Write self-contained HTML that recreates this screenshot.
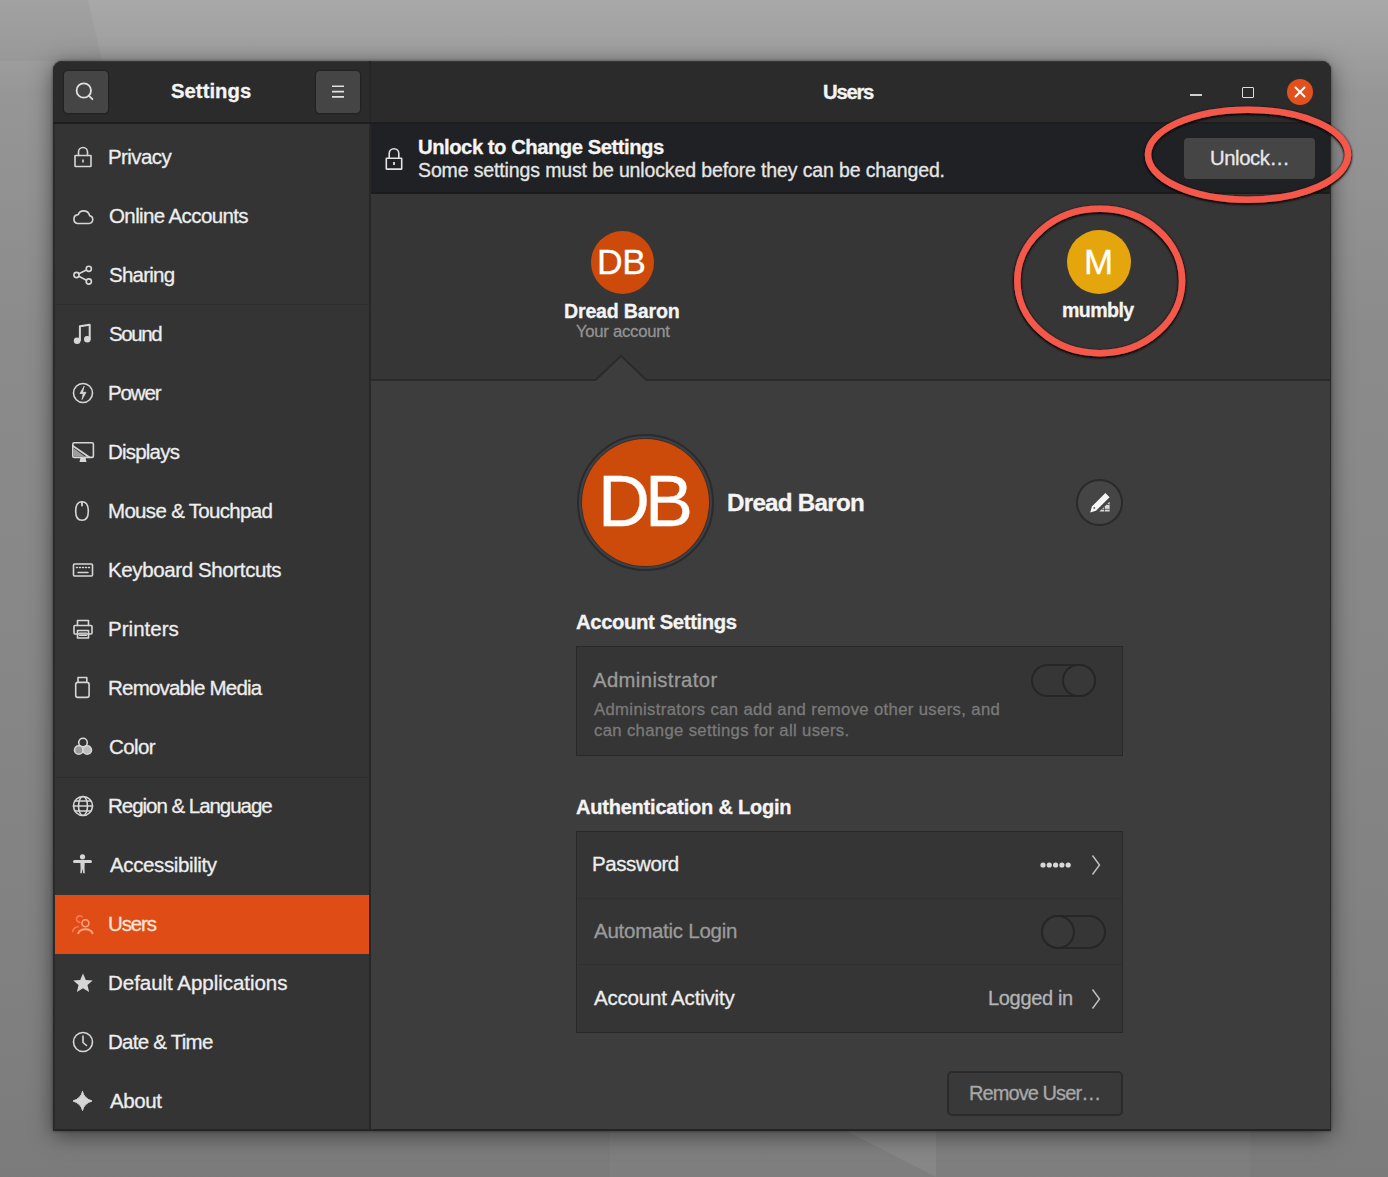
<!DOCTYPE html>
<html><head><meta charset="utf-8"><title>Users - Settings</title>
<style>
*{box-sizing:border-box;margin:0;padding:0}
html,body{width:1388px;height:1177px;overflow:hidden}
body{position:relative;font-family:"Liberation Sans",sans-serif;background:linear-gradient(180deg,#a8a8a8 0%,#a2a2a2 3%,#969696 8%,#8b8b8b 28%,#878787 55%,#808080 85%,#7b7b7b 100%)}
.a{position:absolute}
.t{position:absolute;line-height:1;white-space:nowrap;font-family:"Liberation Sans",sans-serif;-webkit-text-stroke:0.3px currentColor}
svg{position:absolute;overflow:visible}
</style></head><body>
<!-- bg shapes -->
<svg width="1388" height="1177" style="left:0;top:0"><path d="M846 1131H936V1177z" fill="#ffffff" fill-opacity="0.07"/><path d="M610 1131H1250V1177H610z" fill="#ffffff" fill-opacity="0.025"/><path d="M0 0H88L102 61H0z" fill="#000" fill-opacity="0.03"/></svg>
<!-- window -->
<div class="a" style="left:53px;top:61px;width:1278px;height:1070px;border-radius:9px 9px 0 0;background:#3d3d3d;box-shadow:0 4px 22px rgba(0,0,0,.5),0 0 3px rgba(0,0,0,.45)"></div>
<div class="a" style="left:53px;top:61px;width:1278px;height:62px;border-radius:9px 9px 0 0;background:#2b2b2b;box-shadow:inset 0 1px 0 #363636"></div>
<div class="a" style="left:53px;top:122px;width:1278px;height:2px;background:#1d1d1d"></div>
<div class="a" style="left:369px;top:61px;width:2px;height:61px;background:#262626"></div>
<!-- sidebar -->
<div class="a" style="left:53px;top:124px;width:316px;height:1005px;background:#343434"></div>
<div class="a" style="left:369px;top:124px;width:2px;height:1005px;background:#272727"></div>
<div class="a" style="left:53px;top:304px;width:316px;height:1px;background:#2e2e2e"></div>
<div class="a" style="left:53px;top:777px;width:316px;height:1px;background:#2e2e2e"></div>
<div class="a" style="left:53px;top:895px;width:316px;height:59px;background:#e04c16"></div>
<!-- header buttons -->
<div class="a" style="left:63.5px;top:71px;width:44px;height:42px;border-radius:4px;background:#454545;box-shadow:0 0 0 1.2px #222"></div>
<svg width="24" height="24" viewBox="0 0 24 24" style="left:73px;top:80px" fill="none" stroke="#e0e0e0" stroke-width="1.8" stroke-linecap="round"><circle cx="10.8" cy="10.5" r="7.2"/><path d="M15.8 15.6l3.6 3.6"/></svg>
<div class="a" style="left:316px;top:71px;width:44px;height:42px;border-radius:4px;background:#454545;box-shadow:0 0 0 1.2px #222"></div>
<svg width="24" height="24" viewBox="0 0 24 24" style="left:326px;top:80px" fill="none" stroke="#e0e0e0" stroke-width="1.6"><path d="M6 6.3h12M6 11.6h12M6 16.9h12"/></svg>
<!-- window controls -->
<div class="a" style="left:1190px;top:94.2px;width:11.8px;height:1.7px;background:#cfcfcf"></div>
<div class="a" style="left:1242px;top:86.5px;width:11.5px;height:11px;border:1.6px solid #dcdcdc;border-radius:1px"></div>
<div class="a" style="left:1287px;top:79px;width:26px;height:26px;border-radius:50%;background:#e2511d"></div>
<svg width="26" height="26" viewBox="0 0 26 26" style="left:1287px;top:79px" stroke="#ffffff" stroke-width="2" stroke-linecap="round"><path d="M8.5 8.5l9 9M17.5 8.5l-9 9"/></svg>
<!-- infobar -->
<div class="a" style="left:371px;top:124px;width:960px;height:69px;background:#202124"></div>
<div class="a" style="left:371px;top:192px;width:960px;height:2px;background:#1c1c1c"></div>
<svg width="18" height="24" viewBox="0 0 18 24" style="left:385px;top:146.5px" fill="none" stroke="#e2e2e2" stroke-width="1.6"><path d="M4.2 11V6.5a4.8 4.8 0 0 1 9.6 0V11"/><rect x="1.3" y="11.3" width="15.4" height="10.8" rx="0.4"/><rect x="8.1" y="15" width="1.8" height="3" fill="#e2e2e2" stroke="none"/></svg>
<div class="a" style="left:1184.3px;top:137.8px;width:131px;height:41.4px;border-radius:4px;background:#454545"></div>
<!-- carousel -->
<div class="a" style="left:371px;top:194px;width:960px;height:185px;background:#363636"></div>
<div class="a" style="left:371px;top:379px;width:960px;height:2px;background:#2a2a2a"></div>
<svg width="60" height="30" viewBox="0 0 60 30" style="left:590.7px;top:354px"><path d="M0 26.5h4L30 1.5 56 26.5h4V30H0z" fill="#3d3d3d"/><path d="M0 26h4.5L30 1.8 55.5 26H60" fill="none" stroke="#2a2a2a" stroke-width="2"/></svg>
<div class="a" style="left:590.5px;top:230.5px;width:63px;height:63px;border-radius:50%;background:#cd4a0b"></div>
<div class="a" style="left:1066.5px;top:230px;width:64px;height:64px;border-radius:50%;background:#e5a50c"></div>
<!-- main avatar -->
<div class="a" style="left:576.5px;top:433.5px;width:137.5px;height:137.5px;border-radius:50%;background:#3a4149;border:2.2px solid #2a2b2d"></div>
<div class="a" style="left:581.5px;top:438.5px;width:127.5px;height:127.5px;border-radius:50%;background:#cc4b0a;box-shadow:0 0 0 1px #4a2a1a"></div>
<!-- edit button -->
<div class="a" style="left:1076.3px;top:479.4px;width:46.4px;height:46.6px;border-radius:50%;background:#454545;border:2px solid #2a2a2a"></div>
<svg width="70" height="65" viewBox="1065 470 70 65" style="left:1065px;top:470px"><path d="M1105.4 493l4.2 4.2-13.6 13.5-5.8 1.7 1.7-5.8z" fill="#f6f6f6"/><circle cx="1094.3" cy="507.9" r="0.9" fill="#555"/><path d="M1099.3 511.6h10.3v-9.9z" fill="#d8d8d8"/><path d="M1104.5 506.8v4.8M1101.8 509.3h7.8M1106.8 504.5h2.8" stroke="#444" stroke-width="0.8"/></svg>
<!-- admin box -->
<div class="a" style="left:576px;top:646px;width:547px;height:110px;background:#353535;border:1.5px solid #282828"></div>
<div class="a" style="left:1031px;top:663.5px;width:64.5px;height:33.5px;border-radius:17px;border:2px solid #262626;background:#363636"></div>
<div class="a" style="left:1062px;top:663.5px;width:33.5px;height:33.5px;border-radius:50%;border:2px solid #262626;background:#383838"></div>
<!-- auth box -->
<div class="a" style="left:576px;top:831px;width:547px;height:201.5px;background:#353535;border:1.5px solid #282828"></div>
<div class="a" style="left:577.5px;top:897.5px;width:544px;height:1px;background:#303030"></div>
<div class="a" style="left:577.5px;top:964px;width:544px;height:1px;background:#303030"></div>
<svg width="40" height="10" viewBox="0 0 40 10" style="left:1039px;top:859.5px" fill="#d8d8d8"><circle cx="4" cy="5" r="2.6"/><circle cx="10.3" cy="5" r="2.6"/><circle cx="16.6" cy="5" r="2.6"/><circle cx="22.9" cy="5" r="2.6"/><circle cx="29.2" cy="5" r="2.6"/></svg>
<svg width="12" height="24" viewBox="0 0 12 24" style="left:1090px;top:853px" fill="none" stroke="#bdbdbd" stroke-width="1.5"><path d="M2.5 2.5l7 9.5-7 9.5"/></svg>
<div class="a" style="left:1040.7px;top:914.8px;width:65px;height:34px;border-radius:17px;border:2px solid #262626;background:#363636"></div>
<div class="a" style="left:1040.7px;top:914.8px;width:34px;height:34px;border-radius:50%;border:2px solid #262626;background:#383838"></div>
<svg width="12" height="24" viewBox="0 0 12 24" style="left:1090px;top:987px" fill="none" stroke="#bdbdbd" stroke-width="1.5"><path d="M2.5 2.5l7 9.5-7 9.5"/></svg>
<!-- remove user -->
<div class="a" style="left:947.4px;top:1071.2px;width:176px;height:44.6px;border-radius:5px;background:#393939;border:2px solid #2b2b2b"></div>
<!-- window bottom -->
<div class="a" style="left:53px;top:1129px;width:1278px;height:2px;background:#242424"></div>
<div class="a" style="left:53px;top:124px;width:1.5px;height:1007px;background:#2a2a2a"></div>
<div class="a" style="left:1329.5px;top:124px;width:1.5px;height:1007px;background:#2a2a2a"></div>
<svg width="24" height="24" viewBox="0 0 24 24" style="left:71px;top:145px" fill="none" stroke="#d6d6d6" stroke-width="1.6" stroke-linecap="round" stroke-linejoin="round"><path d="M7.5 10.5V7a4.5 4.5 0 0 1 9 0v3.5"/><rect x="4" y="10.5" width="16" height="11" rx="0.5"/><rect x="11.2" y="14.5" width="1.6" height="3" fill="#d6d6d6" stroke="none"/></svg>
<svg width="24" height="24" viewBox="0 0 24 24" style="left:71px;top:204px" fill="none" stroke="#d6d6d6" stroke-width="1.6" stroke-linecap="round" stroke-linejoin="round"><path d="M6.5 19.5h11.5a4 4 0 0 0 .6-7.9A6 6 0 0 0 7.2 10.6 4.5 4.5 0 0 0 6.5 19.5z"/></svg>
<svg width="24" height="24" viewBox="0 0 24 24" style="left:71px;top:263px" fill="none" stroke="#d6d6d6" stroke-width="1.6" stroke-linecap="round" stroke-linejoin="round"><circle cx="5.5" cy="12" r="2.6"/><circle cx="17.8" cy="5.8" r="2.6"/><circle cx="17.8" cy="18.5" r="2.6"/><path d="M7.8 10.8l7.7-3.8M7.8 13.2l7.7 4"/></svg>
<svg width="24" height="24" viewBox="0 0 24 24" style="left:71px;top:322px" fill="none" stroke="#d6d6d6" stroke-width="1.6" stroke-linecap="round" stroke-linejoin="round"><path d="M8.9 18.5V4.3l9.8-1.6v14.2" stroke-width="2"/><circle cx="6.1" cy="18.8" r="2.5" fill="#d6d6d6"/><circle cx="16.3" cy="17.2" r="2.5" fill="#d6d6d6"/></svg>
<svg width="24" height="24" viewBox="0 0 24 24" style="left:71px;top:381px" fill="none" stroke="#d6d6d6" stroke-width="1.6" stroke-linecap="round" stroke-linejoin="round"><circle cx="12" cy="12" r="9.5"/><path d="M13 5.5l-4 7h3.2l-1.2 6 4-7.2h-3.2z" fill="#d6d6d6" stroke-width="0.8"/></svg>
<svg width="24" height="24" viewBox="0 0 24 24" style="left:71px;top:440px" fill="none" stroke="#d6d6d6" stroke-width="1.6" stroke-linecap="round" stroke-linejoin="round"><rect x="1.8" y="2.8" width="20.6" height="14.6" rx="1.5"/><path d="M2 6l16 11"/><path d="M2.6 8.2v8.4h11.2z" fill="#9d9d9d" stroke="none"/><path d="M9.5 17.5h5l1 4.6h-7z" fill="#d6d6d6" stroke="none"/></svg>
<svg width="24" height="24" viewBox="0 0 24 24" style="left:71px;top:499px" fill="none" stroke="#d6d6d6" stroke-width="1.6" stroke-linecap="round" stroke-linejoin="round"><path d="M11 2.8c-4.6 0-6.3 3.6-6.3 9.5 0 5.5 2.4 9 6.3 9s6.3-3.5 6.3-9c0-5.9-1.7-9.5-6.3-9.5z"/><path d="M11 3.5v3" stroke-width="1.8"/></svg>
<svg width="24" height="24" viewBox="0 0 24 24" style="left:71px;top:558px" fill="none" stroke="#d6d6d6" stroke-width="1.6" stroke-linecap="round" stroke-linejoin="round"><rect x="2.5" y="6" width="19" height="12" rx="1"/><path d="M5.5 9.5h1M8.5 9.5h1M11.5 9.5h1M14.5 9.5h1M17.5 9.5h1M7 14.5h10" stroke-width="1.4"/></svg>
<svg width="24" height="24" viewBox="0 0 24 24" style="left:71px;top:617px" fill="none" stroke="#d6d6d6" stroke-width="1.6" stroke-linecap="round" stroke-linejoin="round"><path d="M6.5 8.5V3.5h11v5"/><rect x="3" y="8.5" width="18" height="8.5" rx="1"/><rect x="6.5" y="13.5" width="11" height="7.5"/><path d="M8.5 16h7M8.5 18.5h7" stroke-width="1.2"/></svg>
<svg width="24" height="24" viewBox="0 0 24 24" style="left:71px;top:676px" fill="none" stroke="#d6d6d6" stroke-width="1.6" stroke-linecap="round" stroke-linejoin="round"><rect x="4.7" y="6.4" width="13.4" height="15" rx="2.2"/><path d="M7 6.2V1.5h8.8v4.7"/></svg>
<svg width="24" height="24" viewBox="0 0 24 24" style="left:71px;top:735px" fill="none" stroke="#d6d6d6" stroke-width="1.6" stroke-linecap="round" stroke-linejoin="round"><circle cx="12" cy="7.5" r="4.3"/><circle cx="7.8" cy="15" r="4.3" fill="#9a9a9a"/><circle cx="16.2" cy="15" r="4.3" fill="#bdbdbd"/></svg>
<svg width="24" height="24" viewBox="0 0 24 24" style="left:71px;top:794px" fill="none" stroke="#d6d6d6" stroke-width="1.6" stroke-linecap="round" stroke-linejoin="round"><circle cx="12" cy="12" r="9.5"/><ellipse cx="12" cy="12" rx="4.5" ry="9.5"/><path d="M2.5 12h19M4 7h16M4 17h16"/></svg>
<svg width="24" height="24" viewBox="0 0 24 24" style="left:71px;top:853px" fill="none" stroke="#d6d6d6" stroke-width="1.6" stroke-linecap="round" stroke-linejoin="round"><circle cx="11.5" cy="3.8" r="2.6" fill="#d6d6d6" stroke="none"/><path d="M3.5 8.6h16" stroke-width="3"/><path d="M9.3 8.5h4.5l-.3 6.2.3 5.5h-1.6l-.7-4.6-.7 4.6H9.3l.3-5.5z" fill="#d6d6d6" stroke="none"/></svg>
<svg width="24" height="24" viewBox="0 0 24 24" style="left:71px;top:912px" fill="none" stroke="#ffa47e" stroke-width="1.6" stroke-linecap="round" stroke-linejoin="round"><path d="M11.2 4.8A3.3 3.3 0 1 0 8.8 10.4" stroke="#fb7a50"/><path d="M1.8 19.5c.4-3 2.3-4.6 5.5-4.8" stroke="#fb7a50"/><circle cx="14.4" cy="11.2" r="3.5" stroke="#ffa47e"/><path d="M7.3 21.2c1-2.7 3.6-4 7.1-4s6.1 1.3 7.1 4" stroke="#ffa47e" stroke-width="2"/></svg>
<svg width="24" height="24" viewBox="0 0 24 24" style="left:71px;top:971px" fill="none" stroke="#d6d6d6" stroke-width="1.6" stroke-linecap="round" stroke-linejoin="round"><path d="M12 2.5l2.8 6.4 6.9.6-5.2 4.6 1.6 6.8L12 17.3l-6.1 3.6 1.6-6.8-5.2-4.6 6.9-.6z" fill="#d6d6d6" stroke="none"/></svg>
<svg width="24" height="24" viewBox="0 0 24 24" style="left:71px;top:1030px" fill="none" stroke="#d6d6d6" stroke-width="1.6" stroke-linecap="round" stroke-linejoin="round"><circle cx="12" cy="12" r="9.5"/><path d="M12 6v6.5l3.5 3"/></svg>
<svg width="24" height="24" viewBox="0 0 24 24" style="left:71px;top:1089px" fill="none" stroke="#d6d6d6" stroke-width="1.6" stroke-linecap="round" stroke-linejoin="round"><path d="M11.5 2.5Q13 9.5 21 12 13 14.5 11.5 21.5 10 14.5 2 12 10 9.5 11.5 2.5z" fill="#d6d6d6" stroke="#d6d6d6" stroke-width="1"/></svg>
<div class="t" id="settings" style="left:171.0px;top:81.2px;font-size:20.3px;font-weight:700;color:#f4f4f4;letter-spacing:0.03px">Settings</div>
<div class="t" id="users_t" style="left:823.0px;top:81.5px;font-size:20.3px;font-weight:700;color:#f4f4f4;letter-spacing:-1.27px">Users</div>
<div class="t" id="side0" style="left:108.0px;top:146.9px;font-size:20.5px;font-weight:400;color:#eeeeee;letter-spacing:-0.58px">Privacy</div>
<div class="t" id="side1" style="left:109.0px;top:205.9px;font-size:20.5px;font-weight:400;color:#eeeeee;letter-spacing:-0.61px">Online Accounts</div>
<div class="t" id="side2" style="left:109.0px;top:264.9px;font-size:20.5px;font-weight:400;color:#eeeeee;letter-spacing:-0.75px">Sharing</div>
<div class="t" id="side3" style="left:109.0px;top:323.9px;font-size:20.5px;font-weight:400;color:#eeeeee;letter-spacing:-1.38px">Sound</div>
<div class="t" id="side4" style="left:108.0px;top:382.9px;font-size:20.5px;font-weight:400;color:#eeeeee;letter-spacing:-1.12px">Power</div>
<div class="t" id="side5" style="left:108.0px;top:441.9px;font-size:20.5px;font-weight:400;color:#eeeeee;letter-spacing:-0.79px">Displays</div>
<div class="t" id="side6" style="left:108.0px;top:500.9px;font-size:20.5px;font-weight:400;color:#eeeeee;letter-spacing:-0.68px">Mouse &amp; Touchpad</div>
<div class="t" id="side7" style="left:108.0px;top:559.9px;font-size:20.5px;font-weight:400;color:#eeeeee;letter-spacing:-0.38px">Keyboard Shortcuts</div>
<div class="t" id="side8" style="left:108.0px;top:618.9px;font-size:20.5px;font-weight:400;color:#eeeeee;letter-spacing:0.03px">Printers</div>
<div class="t" id="side9" style="left:108.0px;top:677.9px;font-size:20.5px;font-weight:400;color:#eeeeee;letter-spacing:-0.79px">Removable Media</div>
<div class="t" id="side10" style="left:109.0px;top:736.9px;font-size:20.5px;font-weight:400;color:#eeeeee;letter-spacing:-0.62px">Color</div>
<div class="t" id="side11" style="left:108.0px;top:795.9px;font-size:20.5px;font-weight:400;color:#eeeeee;letter-spacing:-1.03px">Region &amp; Language</div>
<div class="t" id="side12" style="left:110.0px;top:854.9px;font-size:20.5px;font-weight:400;color:#eeeeee;letter-spacing:-0.38px">Accessibility</div>
<div class="t" id="side13" style="left:108.0px;top:913.9px;font-size:20.5px;font-weight:400;color:#fbe3d8;letter-spacing:-1.12px">Users</div>
<div class="t" id="side14" style="left:108.0px;top:972.9px;font-size:20.5px;font-weight:400;color:#eeeeee;letter-spacing:-0.03px">Default Applications</div>
<div class="t" id="side15" style="left:108.0px;top:1031.9px;font-size:20.5px;font-weight:400;color:#eeeeee;letter-spacing:-0.75px">Date &amp; Time</div>
<div class="t" id="side16" style="left:110.0px;top:1090.9px;font-size:20.5px;font-weight:400;color:#eeeeee;letter-spacing:-0.38px">About</div>
<div class="t" id="ib1" style="left:418.0px;top:137.3px;font-size:20.3px;font-weight:700;color:#f4f4f4;letter-spacing:-0.49px">Unlock to Change Settings</div>
<div class="t" id="ib2" style="left:418.0px;top:160.8px;font-size:19.5px;font-weight:400;color:#e6e6e6;letter-spacing:-0.13px">Some settings must be unlocked before they can be changed.</div>
<div class="t" id="unlock" style="left:1210.0px;top:148.2px;font-size:20.3px;font-weight:400;color:#e8e8e8;letter-spacing:-0.42px">Unlock…</div>
<div class="t" id="db_s" style="left:597.0px;top:244.5px;font-size:35.5px;font-weight:400;color:#ffffff;letter-spacing:-0.40px">DB</div>
<div class="t" id="dread_s" style="left:564.0px;top:301.6px;font-size:19.6px;font-weight:700;color:#f4f4f4;letter-spacing:-0.19px">Dread Baron</div>
<div class="t" id="youracc" style="left:576.0px;top:323.6px;font-size:16.7px;font-weight:400;color:#939393;letter-spacing:-0.27px">Your account</div>
<div class="t" id="m" style="left:1084.0px;top:244.1px;font-size:35px;font-weight:400;color:#ffffff;letter-spacing:-4.60px">M</div>
<div class="t" id="mumbly" style="left:1062.0px;top:301.4px;font-size:19.6px;font-weight:700;color:#f4f4f4;letter-spacing:-0.58px">mumbly</div>
<div class="t" id="db_b" style="left:598.0px;top:465.1px;font-size:72px;font-weight:400;color:#ffffff;letter-spacing:-5.00px">DB</div>
<div class="t" id="dread_b" style="left:727.0px;top:491.3px;font-size:24.2px;font-weight:700;color:#f4f4f4;letter-spacing:-0.74px">Dread Baron</div>
<div class="t" id="accset" style="left:576.0px;top:612.2px;font-size:20.3px;font-weight:700;color:#f4f4f4;letter-spacing:-0.38px">Account Settings</div>
<div class="t" id="admin" style="left:593.0px;top:669.9px;font-size:20.3px;font-weight:400;color:#9b9b9b;letter-spacing:0.39px">Administrator</div>
<div class="t" id="desc1" style="left:594.0px;top:701.8px;font-size:16.7px;font-weight:400;color:#7a7a7a;letter-spacing:0.35px">Administrators can add and remove other users, and</div>
<div class="t" id="desc2" style="left:594.0px;top:722.7px;font-size:16.7px;font-weight:400;color:#7a7a7a;letter-spacing:0.34px">can change settings for all users.</div>
<div class="t" id="auth" style="left:576.0px;top:797.0px;font-size:20px;font-weight:700;color:#f4f4f4;letter-spacing:-0.21px">Authentication &amp; Login</div>
<div class="t" id="pwd" style="left:592.0px;top:854.1px;font-size:20.5px;font-weight:400;color:#eeeeee;letter-spacing:-0.40px">Password</div>
<div class="t" id="autologin" style="left:594.0px;top:920.9px;font-size:20.5px;font-weight:400;color:#9b9b9b;letter-spacing:-0.26px">Automatic Login</div>
<div class="t" id="activity" style="left:594.0px;top:988.2px;font-size:20.5px;font-weight:400;color:#eeeeee;letter-spacing:-0.19px">Account Activity</div>
<div class="t" id="logged" style="left:988.0px;top:987.6px;font-size:20px;font-weight:400;color:#b4b4b4;letter-spacing:-0.33px">Logged in</div>
<div class="t" id="remove" style="left:969.0px;top:1083.2px;font-size:20px;font-weight:400;color:#a8a8a8;letter-spacing:-0.92px">Remove User…</div>
<!-- annotations -->
<svg width="1388" height="1177" style="left:0;top:0">
<defs><filter id="sh" x="-20%" y="-20%" width="140%" height="140%"><feGaussianBlur in="SourceAlpha" stdDeviation="1.6"/><feOffset dy="1"/><feComponentTransfer><feFuncA type="linear" slope="1.6"/></feComponentTransfer><feMerge><feMergeNode/><feMergeNode in="SourceGraphic"/></feMerge></filter></defs>
<ellipse cx="1248" cy="154.7" rx="100" ry="45" fill="none" stroke="#f4584b" stroke-width="6.5" filter="url(#sh)"/>
<ellipse cx="1099.7" cy="281" rx="82.4" ry="72.2" fill="none" stroke="#f4584b" stroke-width="6.5" filter="url(#sh)"/>
</svg>
</body></html>
